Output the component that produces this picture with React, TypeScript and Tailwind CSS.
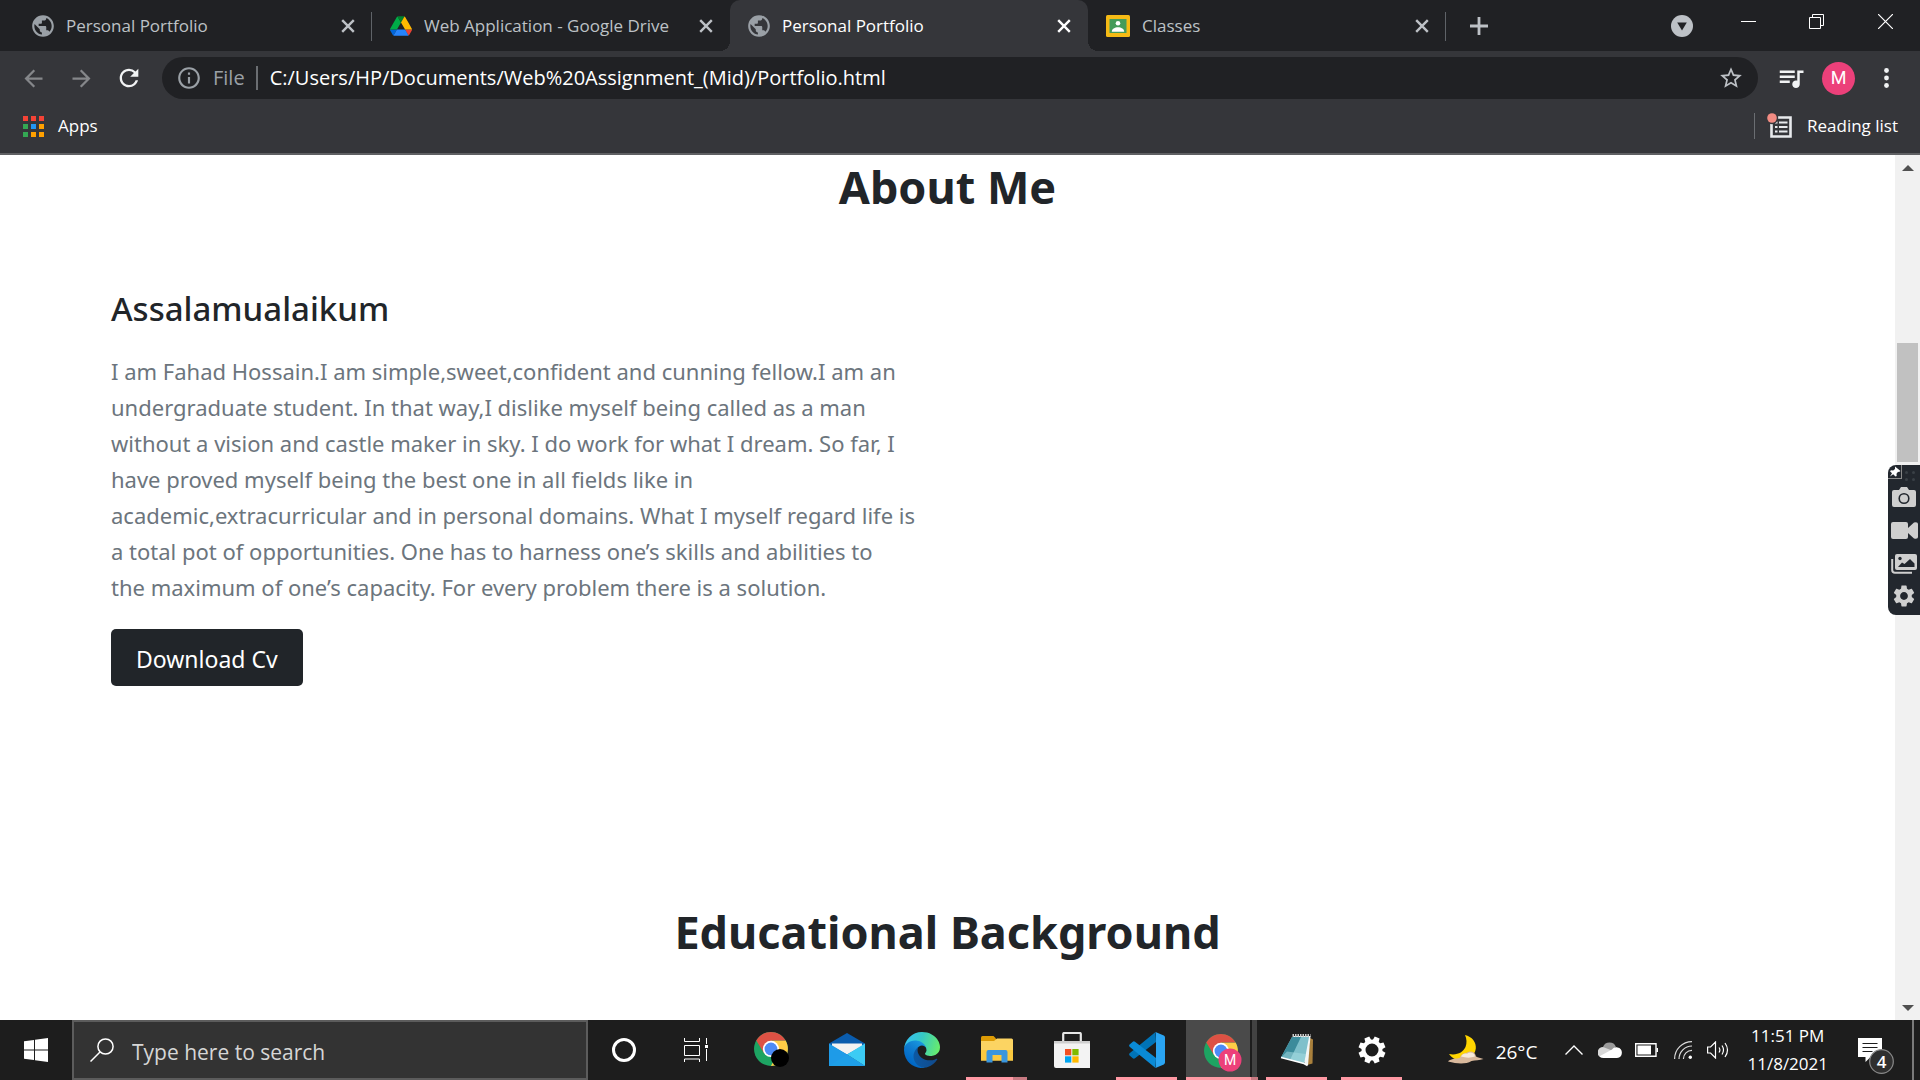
import React from "react";
import type { ReactNode } from "react";
import { MdPublic, MdQueueMusic, MdStarBorder, MdOutlineInfo, MdRefresh, MdArrowBack, MdArrowForward, MdSettings } from "react-icons/md";

/* ---------- icons ---------- */

function DriveIcon() {
  return (
    <svg viewBox="0 0 87.3 78" className="h-5 w-[22px] shrink-0" aria-hidden="true">
      <path fill="#0066da" d="m6.6 66.85 3.85 6.65c.8 1.4 1.95 2.5 3.3 3.3l13.75-23.8h-27.5c0 1.55.4 3.1 1.2 4.5z" />
      <path fill="#00ac47" d="m43.65 25-13.75-23.8c-1.35.8-2.5 1.9-3.3 3.3l-25.4 44a9.06 9.06 0 0 0-1.2 4.5h27.5z" />
      <path fill="#ea4335" d="m73.55 76.8c1.35-.8 2.5-1.9 3.3-3.3l1.6-2.75 7.65-13.25c.8-1.4 1.2-2.95 1.2-4.5h-27.502l5.852 11.5z" />
      <path fill="#00832d" d="m43.65 25 13.75-23.8c-1.35-.8-2.9-1.2-4.5-1.2h-18.5c-1.6 0-3.15.45-4.5 1.2z" />
      <path fill="#2684fc" d="m59.8 53h-32.3l-13.75 23.8c1.35.8 2.9 1.2 4.5 1.2h50.8c1.6 0 3.15-.45 4.5-1.2z" />
      <path fill="#ffba00" d="m73.4 26.5-12.7-22c-.8-1.4-1.95-2.5-3.3-3.3l-13.75 23.8 16.15 28h27.45c0-1.55-.4-3.1-1.2-4.5z" />
    </svg>
  );
}

function ClassroomIcon() {
  return (
    <svg viewBox="0 0 24 22" className="h-[22px] w-6 shrink-0" aria-hidden="true">
      <rect width="24" height="22" rx="1.5" fill="#f5ba15" />
      <rect x="3.5" y="4" width="17" height="14" fill="#449b5a" />
      <circle cx="12" cy="8.2" r="2.3" fill="#fff" />
      <path d="M5.8 16.8c0-3 3-4.6 6.2-4.6s6.2 1.600 6.200 4.600z" fill="#fff" />
    </svg>
  );
}

function GlobeIcon() {
  return <MdPublic className="-m-0.5 size-[26px] shrink-0 text-[#9aa0a6]" aria-hidden="true" />;
}

function CrossIcon() {
  return (
    <svg viewBox="0 0 14 14" className="size-3.5" fill="none" stroke="currentColor" strokeWidth="2.4" aria-hidden="true">
      <path d="M1.200 1.200 12.800 12.800M12.800 1.200 1.200 12.800" />
    </svg>
  );
}

function ReadingListIcon() {
  return (
    <svg viewBox="0 0 26 26" className="size-[26px]" aria-hidden="true">
      <path d="M4.500 4.500h19v19h-19z" fill="none" stroke="#e8eaed" strokeWidth="2.600" />
      <path d="M8 9.500h2.500M12 9.500h8.500M8 14h2.500M12 14h8.500M8 18.500h2.500M12 18.500h8.500" stroke="#e8eaed" strokeWidth="2.200" />
      <circle cx="5" cy="5" r="6.200" fill="#35363a" />
      <circle cx="5" cy="5" r="4.800" fill="#f28b82" />
    </svg>
  );
}

function ChromeIcon({ badge }: { badge: "dark" | "M" }) {
  return (
    <svg viewBox="0 0 40 40" className="size-10" aria-hidden="true">
      <g transform="translate(2 2) scale(.77) translate(-2 -2)">
        <circle cx="24" cy="24" r="22" fill="#1da462" />
        <path fill="#ffcd46" d="M43.050 13A22 22 0 0 1 24 46l9.100-16.750L24 24V13z" />
        <path fill="#dd5144" d="M4.950 13a22 22 0 0 1 38.100 0H24v11l-9.100 5.250z" />
        <circle cx="24" cy="24" r="10.500" fill="#fff" />
        <circle cx="24" cy="24" r="8.300" fill="#4c8bf5" />
      </g>
      {badge === "dark" ? (
        <circle cx="28" cy="28" r="9" fill="#000" />
      ) : (
        <>
          <circle cx="28" cy="28" r="11.500" fill="#ec407a" />
          <text x="28" y="33" textAnchor="middle" fontSize="14" fill="#fff" fontFamily="Roboto, sans-serif">M</text>
        </>
      )}
    </svg>
  );
}

function MailIcon() {
  return (
    <svg viewBox="0 0 36 34" className="h-[34px] w-9" aria-hidden="true">
      <path d="M0 10.500 18 0l18 10.500V22H0z" fill="#0a5cad" />
      <path d="M3 10.500h30V13l-15 8.500L3 13z" fill="#f2f2f2" />
      <path d="M0 10.500 18 21.500 36 33H0z" fill="#1e9be8" />
      <path d="M36 10.500V33L18 21.500z" fill="#3ccbf4" />
      <path d="M0 33 18 21.500 36 33z" fill="#1e9fe8" />
    </svg>
  );
}

function EdgeIcon() {
  return (
    <svg viewBox="0 0 256 256" className="size-9" aria-hidden="true">
      <defs>
        <linearGradient id="edgeDark" x1="60" y1="177" x2="241" y2="177" gradientUnits="userSpaceOnUse">
          <stop stopColor="#0c59a4" />
          <stop offset="1" stopColor="#114a8b" />
        </linearGradient>
        <linearGradient id="edgeBlue" x1="150" y1="70" x2="45" y2="220" gradientUnits="userSpaceOnUse">
          <stop stopColor="#1b9de2" />
          <stop offset="0.500" stopColor="#0f7ccf" />
          <stop offset="1" stopColor="#0067c5" />
        </linearGradient>
        <linearGradient id="edgeGreen" x1="10" y1="50" x2="245" y2="120" gradientUnits="userSpaceOnUse">
          <stop stopColor="#35c1f1" />
          <stop offset="0.450" stopColor="#36c9c5" />
          <stop offset="1" stopColor="#66eb6e" />
        </linearGradient>
      </defs>
      <path fill="url(#edgeDark)" d="M231 190.500c-3.400 1.800-6.900 3.400-10.500 4.700a101.700 101.700 0 0 1-35.900 6.500c-47.300 0-88.500-32.500-88.500-74.300a31.500 31.500 0 0 1 16.400-27.300c-42.800 1.800-53.800 46.400-53.800 72.500 0 73.900 68.100 81.400 82.800 81.400 7.900 0 19.800-2.300 27-4.600l1.300-.4a128.300 128.300 0 0 0 66.600-52.800 4 4 0 0 0-5.400-5.700z" />
      <path fill="url(#edgeBlue)" d="M105.700 241.400a79.200 79.200 0 0 1-22.700-21.300 80.700 80.700 0 0 1 29.500-120c3.200-1.500 8.500-4.100 15.600-4a32.400 32.400 0 0 1 25.700 13 31.900 31.900 0 0 1 6.300 18.700c0-.2 24.500-79.600-80-79.600-43.900 0-80 41.700-80 78.200a130.200 130.200 0 0 0 12.100 56 128 128 0 0 0 156.400 67.100 75.500 75.500 0 0 1-62.800-8z" />
      <path fill="url(#edgeGreen)" d="M152.300 148.900c-.8 1-3.300 2.500-3.300 5.700 0 2.600 1.700 5.100 4.700 7.200 14.400 10 41.500 8.700 41.600 8.700a59.600 59.600 0 0 0 30.300-8.300 61.400 61.400 0 0 0 30.400-52.900c.3-22.400-8-37.300-11.300-43.900C223.500 23.900 177.700 0 128 0A128 128 0 0 0 0 126.200c.5-36.500 36.800-66 80-66 3.500 0 23.500.3 42 10.100 16.300 8.500 24.900 18.900 30.800 29.200 6.200 10.700 7.300 24.100 7.300 29.500s-2.700 13.300-7.800 19.900z" />
    </svg>
  );
}

function FolderIcon() {
  return (
    <svg viewBox="0 0 32 28" className="h-7 w-8" aria-hidden="true">
      <path d="M0 1.500Q0 0 1.500 0h11L15 2.500V8H0z" fill="#dd9b05" />
      <path d="M0 5h13l3-2.500h14.500Q32 2.500 32 4v20.500H0z" fill="#fcd462" />
      <path d="M0 14h32v10.500H0z" fill="#fac93f" />
      <path d="M5.500 26.500V16q0-2 2-2h17q2 0 2 2v10.500h-6V19h-9v7.500z" fill="#3a96dd" />
    </svg>
  );
}

function StoreIcon() {
  return (
    <svg viewBox="0 0 36 36" className="size-9" aria-hidden="true">
      <path d="M9.200 10V2q0-1 1-1h15.600q1 0 1 1v8" fill="none" stroke="#e6e6e6" strokeWidth="2.200" />
      <path d="M0 9h36v27H2q-2 0-2-2z" fill="#f3f3f3" />
      <path d="M0 9h36v2.500H0z" fill="#cfcfcf" />
      <path d="M11 17h6.300v6.300H11z" fill="#f25022" />
      <path d="M18.300 17h6.300v6.300h-6.300z" fill="#7fba00" />
      <path d="M11 24.300h6.300v6.300H11z" fill="#00a4ef" />
      <path d="M18.300 24.300h6.300v6.300h-6.300z" fill="#ffb900" />
    </svg>
  );
}

function VsCodeIcon() {
  return (
    <svg viewBox="0 0 36 36" className="size-9" aria-hidden="true">
      <path d="M26.500 0 27 10 6 26.300q-1.200.9-2.200 0L.6 23.500q-1-1.100 0-2.200z" fill="#0073b7" />
      <path d="M26.500 36 27 26 6 9.700q-1.200-.9-2.200 0L.6 12.500q-1 1.100 0 2.200z" fill="#0a8ad6" />
      <path d="m26.500 0 8.300 3.600Q36 4.200 36 5.500v25q0 1.300-1.200 1.900L26.500 36q.5-.8.500-2V2q0-1.200-.5-2z" fill="#2aa5f3" />
    </svg>
  );
}

function NotepadIcon() {
  return (
    <svg viewBox="0 0 34 34" className="size-[34px]" aria-hidden="true">
      <path d="M30 5l3 1.500-.5 24L27 32z" fill="#a9803c" />
      <path d="M13 3h17.500L28 32.500 25 31z" fill="#f2f5f5" />
      <path d="M12 4h17l-5 26.500L1 24.500z" fill="#7fc0cb" />
      <path d="M12 4h9L10 27 1 24.500z" fill="#3c8b9b" />
      <path d="M7 18.500 26 21l-2 9.500-23-6z" fill="#a9dde4" fillOpacity=".5" />
      <path d="M12.500 2.500h18" stroke="#c9c9c9" strokeWidth="3" strokeDasharray="1.500 1" />
      <path d="M1 24.500 24 30.500l3.500 2" stroke="#fff" strokeWidth="1.500" fill="none" />
    </svg>
  );
}

function MoonIcon() {
  return (
    <svg viewBox="0 0 36 30" className="h-[30px] w-9" aria-hidden="true">
      <path d="M17 0c7 1.500 11.500 7.500 10.800 13.500C27 20.500 20 26 12.500 25.500 7.500 25.200 3.500 22.500 1 19c8 1.500 14-1.500 16.500-7C19 8.200 18.800 4 17 0z" fill="#ffd500" />
      <path d="M5 24c3-1 6 0 7-1.500 1.200-3 3.500-4.500 6.500-4.500 3.500-3 9-1.500 9.500 3.500 2 1 4 1.500 7.500 2.500-4 1.500-8 1.200-12 2-6 3.500-14 3-23.500.500C1 25 3 25 5 24z" fill="#d9b99c" />
      <path d="M13 21.500c2-3 4-3.200 6-2.800 3-2.500 7.500-1.200 8 2.800-4 1.500-9 1.500-14 0z" fill="#f7ead9" />
    </svg>
  );
}

/* ---------- browser frame ---------- */

type TabInfo = { title: string; icon: ReactNode; active?: boolean; divider?: boolean };

const tabs: TabInfo[] = [
  { title: "Personal Portfolio", icon: <GlobeIcon />, divider: true },
  { title: "Web Application - Google Drive", icon: <DriveIcon /> },
  { title: "Personal Portfolio", icon: <GlobeIcon />, active: true },
  { title: "Classes", icon: <ClassroomIcon />, divider: true },
];

const activeTab =
  "relative flex w-[358px] min-w-0 items-center rounded-t-[10px] bg-[#35363a] pl-[18px] pr-[17px] text-white before:absolute before:-left-2.5 before:bottom-0 before:size-2.5 before:bg-[radial-gradient(circle_at_0_0,transparent_10px,#35363a_10px)] after:absolute after:-right-2.5 after:bottom-0 after:size-2.5 after:bg-[radial-gradient(circle_at_100%_0,transparent_10px,#35363a_10px)]";
const idleTab = "relative flex w-[358px] min-w-0 items-center pl-[18px] pr-[17px] text-[#bdc1c6]";

function TabStrip() {
  return (
    <div className="flex h-[51px] bg-[#202124] pl-3.5">
      {tabs.map((tab, i) => (
        <div key={i} className={tab.active ? activeTab : idleTab}>
          {tab.icon}
          <span className="ml-3 flex-1 truncate text-[17px] leading-6">{tab.title}</span>
          <button type="button" aria-label={`Close ${tab.title}`} className="shrink-0">
            <CrossIcon />
          </button>
          {tab.divider && <span className="absolute right-0 top-3 h-[29px] w-px bg-[#5f6368]" />}
        </div>
      ))}
      <button type="button" aria-label="New tab" className="ml-6 text-[#bdc1c6]">
        <svg viewBox="0 0 18 18" className="size-[18px]" stroke="currentColor" strokeWidth="2.800" aria-hidden="true">
          <path d="M9 0v18M0 9h18" />
        </svg>
      </button>
      <div className="ml-auto flex text-white">
        <button type="button" aria-label="Search tabs" className="mr-[21px]">
          <svg viewBox="0 0 22 22" className="size-[22px]" aria-hidden="true">
            <circle cx="11" cy="11" r="11" fill="#bdc1c6" />
            <path d="M6.200 7.500h9.600L11 15.500z" fill="#202124" />
          </svg>
        </button>
        <button type="button" aria-label="Minimize" className="flex h-[43px] w-[68px] items-center justify-center">
          <svg viewBox="0 0 15 15" className="size-[15px]" stroke="currentColor" aria-hidden="true">
            <path d="M0 7.500h15" />
          </svg>
        </button>
        <button type="button" aria-label="Restore" className="flex h-[43px] w-[68px] items-center justify-center">
          <svg viewBox="0 0 15 15" className="size-[15px]" fill="none" stroke="currentColor" aria-hidden="true">
            <path d="M.5 3.500h11v11H.5zM3.500 3.500v-3h11v11h-3" />
          </svg>
        </button>
        <button type="button" aria-label="Close window" className="flex h-[43px] w-[70px] items-center justify-center">
          <svg viewBox="0 0 15 15" className="size-[15px]" stroke="currentColor" strokeWidth="1.200" aria-hidden="true">
            <path d="M0 0l15 15M15 0 0 15" />
          </svg>
        </button>
      </div>
    </div>
  );
}

function Toolbar() {
  return (
    <div className="flex items-center bg-[#35363a] py-1.5 pl-5 pr-[31px]">
      <button type="button" aria-label="Back" className="text-[#85878a]">
        <MdArrowBack className="size-[27px]" />
      </button>
      <button type="button" aria-label="Forward" className="ml-[21px] text-[#85878a]">
        <MdArrowForward className="size-[27px]" />
      </button>
      <button type="button" aria-label="Reload" className="ml-5 text-[#f1f3f4]">
        <MdRefresh className="size-7" />
      </button>
      <label className="ml-[19px] flex h-[42px] flex-1 items-center rounded-full bg-[#202124] pl-3.5 pr-3.5 text-xl leading-7">
        <MdOutlineInfo className="size-[26px] text-[#9aa0a6]" aria-hidden="true" />
        <span className="ml-[11px] text-[#9aa0a6]">File</span>
        <span className="ml-[11px] h-6 w-0.5 bg-[#6b6e72]" />
        <input
          type="text"
          aria-label="Address"
          defaultValue="C:/Users/HP/Documents/Web%20Assignment_(Mid)/Portfolio.html"
          className="ml-3 min-w-0 flex-1 bg-transparent text-white outline-none"
        />
        <button type="button" aria-label="Bookmark this page" className="text-[#bdc1c6]">
          <MdStarBorder className="size-[26px]" />
        </button>
      </label>
      <button type="button" aria-label="Media controls" className="ml-[18px] text-[#f1f3f4]">
        <MdQueueMusic className="size-[30px]" />
      </button>
      <button type="button" aria-label="Profile" className="ml-4 flex size-[33px] items-center justify-center rounded-full bg-[#ec407a] font-[Roboto] text-lg text-white">
        M
      </button>
      <button type="button" aria-label="Menu" className="ml-[29px] text-[#f1f3f4]">
        <svg viewBox="0 0 5 20" className="h-5 w-[5px]" fill="currentColor" aria-hidden="true">
          <circle cx="2.500" cy="2.500" r="2.400" />
          <circle cx="2.500" cy="10" r="2.400" />
          <circle cx="2.500" cy="17.500" r="2.400" />
        </svg>
      </button>
    </div>
  );
}

const appDots = [
  "bg-[#f44336]", "bg-[#f44336]", "bg-[#f44336]",
  "bg-[#34a853]", "bg-[#2196f3]", "bg-[#ffa000]",
  "bg-[#34a853]", "bg-[#ffa000]", "bg-[#ffa000]",
];

function BookmarksBar() {
  return (
    <div className="flex h-[50px] items-center justify-between border-b-2 border-[#5f6063] bg-[#35363a] pb-1.5 pl-[23px] pr-[22px] text-[17px] leading-6 text-white">
      <a href="#apps" className="flex items-center gap-3.5">
        <span className="grid grid-cols-3 gap-x-[3px] gap-y-[3px]">
          {appDots.map((c, i) => (
            <span key={i} className={`size-[5px] ${c}`} />
          ))}
        </span>
        Apps
      </a>
      <button type="button" className="flex items-center border-l border-[#6b6e72] pl-3">
        <ReadingListIcon />
        <span className="ml-3.5">Reading list</span>
      </button>
    </div>
  );
}

/* ---------- page ---------- */

function Portfolio() {
  return (
    <main className="min-w-0 flex-1 overflow-hidden bg-white px-[111px] pt-0.5 font-['Noto_Sans',sans-serif] text-[#212529]">
      <section>
        <h1 className="text-center text-[45px] font-bold leading-[60px]">About Me</h1>
        <div className="mt-[72px] grid grid-cols-2">
          <div className="pr-6">
            <h3 className="text-[33px] font-medium leading-10">Assalamualaikum</h3>
            <p className="mt-6 text-[22px] leading-9 text-[#6c757d]">
              I am Fahad Hossain.I am simple,sweet,confident and cunning fellow.I am an undergraduate student. In that
              way,I dislike myself being called as a man without a vision and castle maker in sky. I do work for what I
              dream. So far, I have proved myself being the best one in all fields like in academic,extracurricular and
              in personal domains. What I myself regard life is a total pot of opportunities. One has to harness one’s
              skills and abilities to
              <br />
              the maximum of one’s capacity. For every problem there is a solution.
            </p>
            <a href="#cv" className="mt-6 inline-block rounded-[5px] bg-[#212529] px-[25px] pb-2.5 pt-[13px] text-[23px] leading-[34px] text-white">
              Download Cv
            </a>
          </div>
        </div>
      </section>
      <section className="mt-[216px]">
        <h1 className="text-center text-[45px] font-bold leading-[60px]">Educational Background</h1>
      </section>
    </main>
  );
}

function Scrollbar() {
  return (
    <div className="flex w-[25px] flex-col items-center bg-[#f1f1f1]" aria-hidden="true">
      <span className="flex h-[25px] items-center">
        <svg viewBox="0 0 12 6" className="h-1.5 w-3"><path d="M0 6 6 0l6 6z" fill="#505050" /></svg>
      </span>
      <span className="grow-[163]" />
      <span className="w-[21px] grow-[119] bg-[#c1c1c1]" />
      <span className="grow-[533]" />
      <span className="flex h-[25px] items-center">
        <svg viewBox="0 0 12 6" className="h-1.5 w-3"><path d="m0 0 6 6 6-6z" fill="#505050" /></svg>
      </span>
    </div>
  );
}

function CaptureWidget() {
  return (
    <div className="absolute right-0 top-[310px] flex h-[150px] w-8 flex-col items-center rounded-l-lg bg-[#22272e] pt-[22px] text-[#cfcfcf]">
      <button type="button" aria-label="Pin" className="absolute left-0 top-0 flex size-3.5 items-center justify-center border-b border-r border-[#8a8a8a] text-white">
        <svg viewBox="0 0 12 12" className="size-3" fill="currentColor" aria-hidden="true">
          <path d="M6 .5 11.500 5l-1.500 1-1-.3-1.500 2 .2 2.300-1.200.5L4.200 8.200 1 10.500l2-3.200L1 5.200 2 4.300l2.200.3L6 3z" />
        </svg>
      </button>
      <span className="absolute left-[17px] top-1.5 grid grid-cols-2 gap-1">
        <span className="size-[3px] rounded-full bg-[#3a4046]" />
        <span className="size-[3px] rounded-full bg-[#3a4046]" />
        <span className="size-[3px] rounded-full bg-[#3a4046]" />
        <span className="size-[3px] rounded-full bg-[#3a4046]" />
      </span>
      <button type="button" aria-label="Screenshot">
        <svg viewBox="0 0 24 20" className="h-5 w-6" aria-hidden="true">
          <path d="M2 3h5l2-3h6l2 3h5q2 0 2 2v13q0 2-2 2H2q-2 0-2-2V5q0-2 2-2z" fill="currentColor" />
          <circle cx="12" cy="11.500" r="4.800" fill="none" stroke="#22272e" strokeWidth="1.600" />
        </svg>
      </button>
      <button type="button" aria-label="Record video" className="mt-[15px]">
        <svg viewBox="0 0 27 17" className="h-[17px] w-[27px]" fill="currentColor" aria-hidden="true">
          <path d="M2 0h13q2 0 2 2v4l6-5.500Q27-.5 27 2v13q0 2.500-4 1.500L17 11v4q0 2-2 2H2q-2 0-2-2V2q0-2 2-2z" />
        </svg>
      </button>
      <button type="button" aria-label="Gallery" className="mt-[15px]">
        <svg viewBox="0 0 26 20" className="h-5 w-[26px]" aria-hidden="true">
          <path d="M1.200 5v11q0 2.800 2.800 2.800h17" fill="none" stroke="currentColor" strokeWidth="2" />
          <rect x="4" y="0" width="22" height="16" rx="2" fill="currentColor" />
          <circle cx="9" cy="4.500" r="1.700" fill="#22272e" />
          <path d="m7 13 4-4.500 2.500 1.500L19 5l4.500 4.500V13z" fill="#22272e" />
        </svg>
      </button>
      <button type="button" aria-label="Settings" className="mt-[9px]">
        <MdSettings className="size-[26px]" />
      </button>
    </div>
  );
}

/* ---------- taskbar ---------- */

type TaskApp = { name: string; icon: ReactNode; open?: boolean; focused?: boolean };

const apps: TaskApp[] = [
  { name: "Google Chrome", icon: <ChromeIcon badge="dark" /> },
  { name: "Mail", icon: <MailIcon /> },
  { name: "Microsoft Edge", icon: <EdgeIcon /> },
  { name: "File Explorer", icon: <FolderIcon />, open: true },
  { name: "Microsoft Store", icon: <StoreIcon /> },
  { name: "Visual Studio Code", icon: <VsCodeIcon />, open: true },
  { name: "Google Chrome - M", icon: <ChromeIcon badge="M" />, focused: true },
  { name: "Notepad", icon: <NotepadIcon />, open: true },
  {
    name: "Settings",
    open: true,
    icon: (
      <svg viewBox="-14 -14 28 28" className="size-7" aria-hidden="true">
        <circle r="8.500" fill="none" stroke="#fff" strokeWidth="4" />
        {[22.500, 67.500, 112.500, 157.500].map((a) => (
          <g key={a} transform={`rotate(${a})`}>
            <path d="M-2.600-13.500h5.200L3.200-9h-6.400zM-2.600 13.500h5.200L3.200 9h-6.400z" fill="#fff" />
          </g>
        ))}
      </svg>
    ),
  },
];

function TaskButton({ app }: { app: TaskApp }) {
  if (app.focused) {
    return (
      <button type="button" aria-label={app.name} className="relative flex w-[75px] px-0.5">
        <span className="flex h-full w-[65px] items-center justify-center bg-[#4a4a4a] pl-2 pt-1">{app.icon}</span>
        <span className="ml-0.5 h-full w-[5px] bg-[#424242]" />
        <span className="absolute bottom-0 left-0.5 h-[3px] w-[65px] bg-[#ff99a4]" />
        <span className="absolute bottom-0 left-[67px] h-[3px] w-[7px] bg-[#c87a82]" />
      </button>
    );
  }
  return (
    <button type="button" aria-label={app.name} className="relative flex w-[75px] items-center justify-center">
      {app.icon}
      {app.open && <span className="absolute bottom-0 left-[7px] h-[3px] w-[61px] bg-[#ff99a4]" />}
      {app.name === "File Explorer" && <span className="absolute bottom-0 left-[54px] h-[3px] w-3.5 bg-[#c87a82]" />}
    </button>
  );
}

function Taskbar() {
  return (
    <footer className="flex h-[60px] bg-[#1d1d1d] text-white">
      <button type="button" aria-label="Start" className="flex w-[72px] items-center justify-center">
        <svg viewBox="0 0 24 24" className="size-6" fill="#fff" aria-hidden="true">
          <path d="M0 3.300 10 2v9.500H0zM11 1.800 24 0v11.500H11zM0 12.500h10V22L0 20.700zM11 12.500h13V24l-13-1.800z" />
        </svg>
      </button>
      <label className="flex w-[516px] items-center border-2 border-[#5c5c5c] bg-[#333333] pl-4">
        <svg viewBox="0 0 24 24" className="size-6" fill="none" stroke="#fff" strokeWidth="1.500" aria-hidden="true">
          <circle cx="15.500" cy="8.500" r="7.600" />
          <path d="M10 14 .5 23.500" />
        </svg>
        <input
          type="text"
          aria-label="Type here to search"
          placeholder="Type here to search"
          className="ml-[18px] min-w-0 flex-1 bg-transparent pt-1 text-[21px] leading-7 outline-none placeholder:text-[#d6d6d6]"
        />
      </label>
      <button type="button" aria-label="Cortana" className="flex w-[72px] items-center justify-center">
        <span className="size-6 rounded-full border-[3px] border-white" />
      </button>
      <button type="button" aria-label="Task view" className="flex w-[72px] items-center justify-center">
        <svg viewBox="0 0 24 24" className="size-6" fill="none" stroke="#fff" aria-hidden="true">
          <path d="M.5 0v3.500h15V0M.5 7.500h15v10H.5zM.5 24v-3h15v3M22.500 0v6M22.500 11v12" />
          <path d="M21 7h3v3h-3z" fill="#fff" stroke="none" />
        </svg>
      </button>
      <div className="ml-0.5 flex">
        {apps.map((app) => (
          <TaskButton key={app.name} app={app} />
        ))}
      </div>
      <div className="ml-auto flex items-center pr-1.5">
        <button type="button" className="flex items-center gap-3 text-[19px] leading-6">
          <MoonIcon />
          <span className="pt-1">26°C</span>
        </button>
        <button type="button" aria-label="Show hidden icons" className="ml-7">
          <svg viewBox="0 0 18 10" className="h-2.5 w-[18px]" fill="none" stroke="#fff" strokeWidth="1.400" aria-hidden="true">
            <path d="m.5 9.500 8.500-8.500 8.500 8.500" />
          </svg>
        </button>
        <svg viewBox="0 0 24 16" className="ml-[15px] h-4 w-6" role="img" aria-label="OneDrive">
          <path d="M5 5a7 7 0 0 1 13 0l-9 8z" fill="#9a9a9a" />
          <path d="M5 5a5.500 5.500 0 0 0-3 10l12-6.500z" fill="#d8d8d8" />
          <path d="M2 15q1 1 3.500 1H19a5.300 5.300 0 0 0 .5-10.500c-2.500-.5-4 .5-5.500 2L2 14z" fill="#fff" />
        </svg>
        <svg viewBox="0 0 23 14" className="ml-[13px] h-3.5 w-[23px]" role="img" aria-label="Battery">
          <path d="M.7.7h20.300v12.600H.7z" fill="none" stroke="#fff" strokeWidth="1.400" />
          <path d="M2.500 2.500H16v9H2.500zM21.500 5H23v4h-1.500z" fill="#fff" />
        </svg>
        <svg viewBox="0 0 18 18" className="ml-4 size-[18px]" fill="none" stroke="#dcdcdc" strokeWidth="1.200" role="img" aria-label="Network">
          <path d="M.6 18A17.400 17.400 0 0 1 18 .6M5 18A13 13 0 0 1 18 5M9.400 18A8.600 8.600 0 0 1 18 9.400" />
          <circle cx="16.300" cy="16.300" r="1.700" fill="#fff" stroke="none" />
        </svg>
        <svg viewBox="0 0 22 18" className="ml-[15px] h-[18px] w-[22px]" fill="none" stroke="#fff" strokeWidth="1.200" role="img" aria-label="Volume">
          <path d="M.6 6h3L8.500 1v16l-4.900-5h-3zM12 6.500q1.800 2.500 0 5M15 4.500q3 4.500 0 9M18 2q5 7 0 14" />
        </svg>
        <button type="button" className="ml-[18px] flex flex-col items-center text-[17px] leading-7">
          <span>11:51 PM</span>
          <span>11/8/2021</span>
        </button>
        <button type="button" aria-label="4 new notifications" className="ml-[30px] pt-3">
          <svg viewBox="0 0 36 36" className="size-9" aria-hidden="true">
            <path d="M0 0h24v19H12.500l-5 5v-5H0z" fill="#fff" />
            <path d="M4.500 5.500h15M4.500 9.500h15M4.500 13.500h10" stroke="#1d1d1d" strokeWidth="1.200" />
            <circle cx="23.500" cy="23.500" r="11.800" fill="#2f2f2f" stroke="#8a8a8a" strokeWidth="1.200" />
            <text x="23.500" y="29.500" textAnchor="middle" fontSize="17" fontWeight="600" fill="#fff" fontFamily="Open Sans, sans-serif">4</text>
          </svg>
        </button>
        <span className="ml-[18px] h-[60px] w-0.5 bg-[#7a7a7a]" />
      </div>
    </footer>
  );
}

export default function App() {
  return (
    <div className="flex h-screen flex-col overflow-hidden font-['Open_Sans',sans-serif]">
      <header>
        <TabStrip />
        <Toolbar />
        <BookmarksBar />
      </header>
      <div className="relative flex min-h-0 flex-1">
        <Portfolio />
        <Scrollbar />
        <CaptureWidget />
      </div>
      <Taskbar />
    </div>
  );
}
